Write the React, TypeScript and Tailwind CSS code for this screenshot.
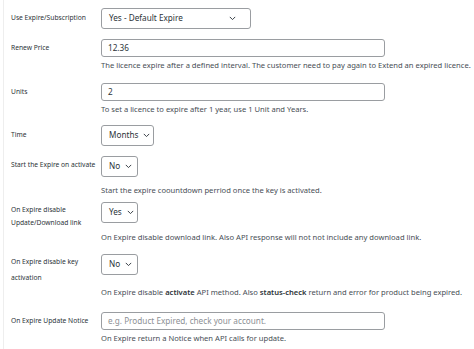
import React from "react";

const font = { fontFamily: '"Noto Sans", "Open Sans", sans-serif' };

function Chevron() {
  return (
    <svg width="7" height="5" viewBox="0 0 7 5" className="ml-[5px] shrink-0">
      <path d="M0.8 0.9 L3.5 3.6 L6.2 0.9" fill="none" stroke="#3c434a" strokeWidth="1" />
    </svg>
  );
}

function Select({ value, w, spread = false }: { value: string; w: string; spread?: boolean }) {
  return (
    <div
      className={`${w} shrink-0 h-[21px] border border-[#9a9da1] rounded-[3px] bg-white flex items-center pl-[7px] pr-[6px] text-[8.2px] text-[#2c3338] whitespace-nowrap ${
        spread ? "justify-between pr-[14px]" : ""
      }`}
    >
      <span>{value}</span>
      <Chevron />
    </div>
  );
}

function Input({ value, placeholder }: { value?: string; placeholder?: string }) {
  return (
    <div className="w-[284px] h-[18px] border border-[#9a9da1] rounded-[3px] bg-white flex items-center px-[6px] text-[8.2px] whitespace-nowrap">
      {value ? <span className="text-[#2c3338]">{value}</span> : <span className="text-[#8c8f94]">{placeholder}</span>}
    </div>
  );
}

function Desc({ children, mt }: { children: React.ReactNode; mt: string }) {
  return <div className={`${mt} text-[7.6px] text-[#474e55] leading-[13px] whitespace-nowrap`}>{children}</div>;
}

function L({ children, mt = "" }: { children: React.ReactNode; mt?: string }) {
  return <div className={`${mt} text-[6.7px] text-[#2c3338] leading-[13px] whitespace-nowrap`}>{children}</div>;
}

function Col({ children, pt }: { children: React.ReactNode; pt: string }) {
  return <div className={`w-[90px] shrink-0 ${pt}`}>{children}</div>;
}

export default function App() {
  return (
    <div className="w-[474px] h-[349px] bg-white overflow-hidden relative" style={font}>
      <div className="absolute left-[3px] top-0 bottom-0 w-px bg-[#eeeeee]" />
      <div className="pl-[11px] pt-[8px]">
        {/* Row 1 */}
        <div className="flex h-[31px]">
          <Col pt="pt-[3px]"><L>Use Expire/Subscription</L></Col>
          <Select value="Yes - Default Expire" w="w-[150px]" spread />
        </div>
        {/* Row 2 */}
        <div className="flex h-[44px]">
          <Col pt="pt-[2px]"><L>Renew Price</L></Col>
          <div>
            <Input value="12.36" />
            <Desc mt="mt-[2px]">The licence expire after a defined interval. The customer need to pay again to Extend an expired licence.</Desc>
          </div>
        </div>
        {/* Row 3 */}
        <div className="flex h-[42px]">
          <Col pt="pt-[2px]"><L>Units</L></Col>
          <div>
            <Input value="2" />
            <Desc mt="mt-[2px]">To set a licence to expire after 1 year, use 1 Unit and Years.</Desc>
          </div>
        </div>
        {/* Row 4 */}
        <div className="flex h-[31px]">
          <Col pt="pt-[3px]"><L>Time</L></Col>
          <Select value="Months" w="w-[53px]" />
        </div>
        {/* Row 5 */}
        <div className="flex h-[46px]">
          <Col pt="pt-[2px]"><L>Start the Expire on activate</L></Col>
          <div>
            <Select value="No" w="w-[37px]" />
            <Desc mt="mt-[7px]">Start the expire coountdown perriod once the key is activated.</Desc>
          </div>
        </div>
        {/* Row 6 */}
        <div className="flex h-[52px]">
          <Col pt="pt-[1px]">
            <L>On Expire disable</L>
            <L>Update/Download link</L>
          </Col>
          <div>
            <Select value="Yes" w="w-[37px]" />
            <Desc mt="mt-[8px]">On Expire disable download link. Also API response will not not include any download link.</Desc>
          </div>
        </div>
        {/* Row 7 */}
        <div className="flex h-[58px]">
          <Col pt="pt-[1px]">
            <L>On Expire disable key</L>
            <L mt="mt-[3px]">activation</L>
          </Col>
          <div>
            <Select value="No" w="w-[37px]" />
            <Desc mt="mt-[11px]">
              On Expire disable <span className="font-semibold text-[#2c3338]">activate</span> API method. Also{" "}
              <span className="font-semibold text-[#2c3338]">status-check</span> return and error for product being expired.
            </Desc>
          </div>
        </div>
        {/* Row 8 */}
        <div className="flex">
          <Col pt="pt-[2px]"><L>On Expire Update Notice</L></Col>
          <div>
            <Input placeholder="e.g. Product Expired, check your account." />
            <Desc mt="mt-[2px]">On Expire return a Notice when API calls for update.</Desc>
          </div>
        </div>
      </div>
    </div>
  );
}
